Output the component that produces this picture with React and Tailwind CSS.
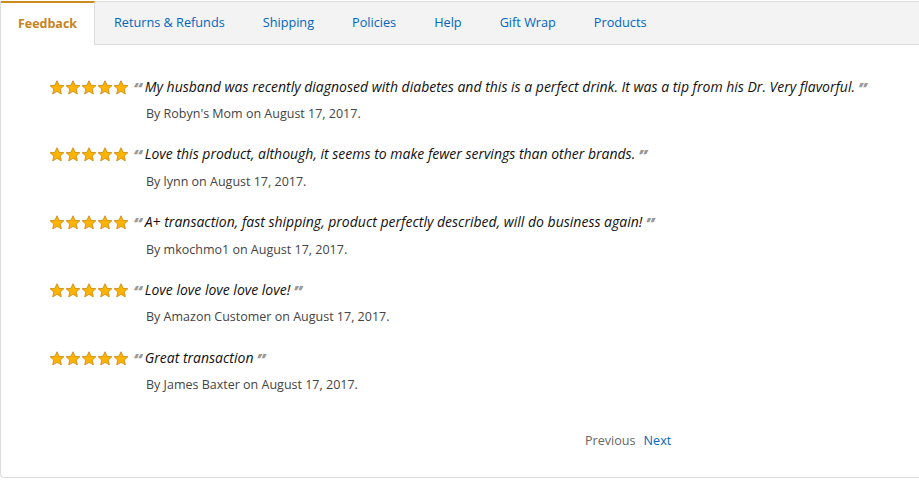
import React from "react";

const tabs = [
  "Feedback",
  "Returns & Refunds",
  "Shipping",
  "Policies",
  "Help",
  "Gift Wrap",
  "Products",
];

const reviews = [
  {
    text: "My husband was recently diagnosed with diabetes and this is a perfect drink. It was a tip from his Dr. Very flavorful.",
    by: "Robyn's Mom",
  },
  {
    text: "Love this product, although, it seems to make fewer servings than other brands.",
    by: "lynn",
  },
  {
    text: "A+ transaction, fast shipping, product perfectly described, will do business again!",
    by: "mkochmo1",
  },
  { text: "Love love love love love!", by: "Amazon Customer" },
  { text: "Great transaction", by: "James Baxter" },
];

function Star() {
  return (
    <svg width="16" height="15" viewBox="0 0 24 23">
      <path
        d="M12 1.2l3.1 6.9 7.4.7-5.6 5 1.7 7.4L12 17.4l-6.6 3.8 1.7-7.4-5.6-5 7.4-.7z"
        fill="#ffb400"
        stroke="#d08a16"
        strokeWidth="1.4"
        strokeLinejoin="round"
      />
    </svg>
  );
}

export default function App() {
  return (
    <div
      className="w-[930px] h-[480px] bg-white pt-px"
      style={{ fontFamily: '"Open Sans", "Liberation Sans", sans-serif' }}
    >
      <div className="h-[477px] border-l border-b border-t border-[#dddddd] rounded-bl-[4px] flex flex-col">
        {/* tabs */}
        <div className="flex h-[43px] bg-[#f3f3f3] border-b border-[#dddddd]">
          {tabs.map((t, i) =>
            i === 0 ? (
              <div
                key={t}
                className="w-[94px] -mt-px h-[44px] bg-white border-t-2 border-[#d08c1b] border-r border-r-[#dddddd] flex items-center justify-center text-[12.5px] font-bold text-[#c7831c]"
              >
                {t}
              </div>
            ) : (
              <div
                key={t}
                className="px-[19px] flex items-center text-[12.7px] text-[#0066c0]"
              >
                {t}
              </div>
            )
          )}
        </div>

        {/* reviews */}
        <div className="pl-[48px] pt-[31px] flex flex-col gap-[20px]">
          {reviews.map((r) => (
            <div key={r.by} className="flex flex-col">
              <div className="flex items-center h-[20px]">
                <div className="flex mt-[2px]">
                  <Star />
                  <Star />
                  <Star />
                  <Star />
                  <Star />
                </div>
                <div className="ml-[4px] flex items-center gap-[3px] text-[14px] italic text-[#111111]">
                  <span className="text-[18px] font-extrabold italic text-[#999999] leading-none mt-[5px]">
                    &#8220;
                  </span>
                  <span>{r.text}</span>
                  <span className="text-[18px] font-extrabold italic text-[#999999] leading-none mt-[5px]">
                    &#8221;
                  </span>
                </div>
              </div>
              <div className="pl-[97px] mt-[9px] text-[12.5px] text-[#444444]">
                By {r.by} on August 17, 2017.
              </div>
            </div>
          ))}
        </div>

        <div className="mt-auto mb-[26px] pl-[584px] flex gap-[8px] text-[12.6px]">
          <span className="text-[#666666]">Previous</span>
          <span className="text-[#0066c0]">Next</span>
        </div>
      </div>
    </div>
  );
}
